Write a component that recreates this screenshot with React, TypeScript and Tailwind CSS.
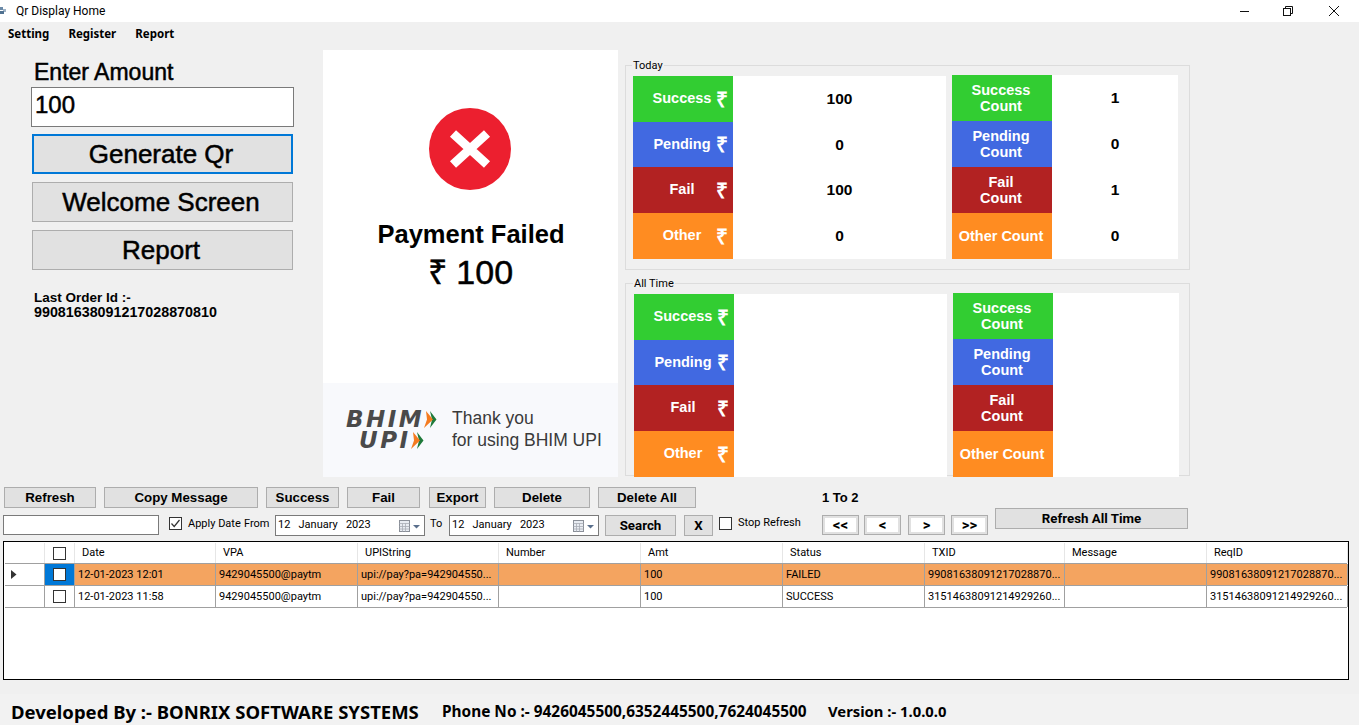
const ui = { fontFamily: '"Roboto", sans-serif' };

const stats = [
  { label: "Success", count: ["Success", "Count"], color: "bg-[#32cd32]", h: "h-[46px]", value: "100", n: "1" },
  { label: "Pending", count: ["Pending", "Count"], color: "bg-[#4169e1]", h: "h-[45px]", value: "0", n: "0" },
  { label: "Fail", count: ["Fail", "Count"], color: "bg-[#b22222]", h: "h-[46px]", value: "100", n: "1" },
  { label: "Other", count: ["Other Count"], color: "bg-[#ff8c21]", h: "h-[46px]", value: "0", n: "0" },
];

const columns = ["Date", "VPA", "UPIString", "Number", "Amt", "Status", "TXID", "Message", "ReqID"];

const rows = [
  {
    selected: true,
    cells: ["12-01-2023 12:01", "9429045500@paytm", "upi://pay?pa=942904550...", "", "100", "FAILED", "99081638091217028870...", "", "99081638091217028870..."],
  },
  {
    selected: false,
    cells: ["12-01-2023 11:58", "9429045500@paytm", "upi://pay?pa=942904550...", "", "100", "SUCCESS", "31514638091214929260...", "", "31514638091214929260..."],
  },
];

const gridCols = "grid grid-cols-[40px_30px_141px_142px_141px_142px_142px_142px_140px_142px_141px]";

function Btn({ w, children, className = "" }: { w: string; children: string; className?: string }) {
  return (
    <button className={`${w} h-[21px] shrink-0 bg-[#e1e1e1] border border-[#adadad] text-[13.3px] leading-[20px] font-bold text-black ${className}`}>
      {children}
    </button>
  );
}

function BigBtn({ children, focus }: { children: string; focus?: boolean }) {
  return (
    <button
      className={`w-[261px] h-[40px] pr-[3px] bg-[#e1e1e1] text-[26px] leading-none [-webkit-text-stroke:0.5px_#000] text-black ${
        focus ? "border-2 border-[#0078d7]" : "border border-[#adadad]"
      }`}
    >
      {children}
    </button>
  );
}

function PageBtn({ children }: { children: string }) {
  return (
    <button className="w-[37px] h-[20px] shrink-0 border border-[#adadad] bg-[#e1e1e1] p-[2px]">
      <span className="flex h-full items-center justify-center bg-white text-[15px] leading-none font-bold">{children}</span>
    </button>
  );
}

function Check({ checked }: { checked?: boolean }) {
  return (
    <span className="flex w-[13px] h-[13px] shrink-0 items-center justify-center border border-[#333] bg-white">
      {checked && (
        <svg width="11" height="11" viewBox="0 0 11 11" fill="none" stroke="#333" strokeWidth="1.2">
          <path d="M1.5 5.5 4.2 8.5 9.5 2" />
        </svg>
      )}
    </span>
  );
}

function DatePicker() {
  return (
    <div className="flex w-[150px] h-[21px] shrink-0 items-center border border-[#7a7a7a] bg-white pl-[2px] text-[11px] text-black" style={ui}>
      <span className="whitespace-pre">12   January   2023</span>
      <svg className="ml-auto mr-[2px]" width="24" height="14" viewBox="0 0 24 14">
        <rect x="1.5" y="1.5" width="10" height="11" fill="#e8ecf2" stroke="#8a8f98" />
        <path d="M1.5 4.5h10M4.5 4.5v8M7.5 4.5v8M1.5 7.5h10M1.5 10h10" stroke="#a8adb5" strokeWidth="0.8" />
        <path d="M15 6h7l-3.5 3.5z" fill="#5a6f8c" />
      </svg>
    </div>
  );
}

function Chevrons() {
  return (
    <svg className="shrink-0" width="13" height="17" viewBox="0 0 13 17">
      <path d="M6 0l6.5 8.5L6 17l2-8.5z" fill="#1f7a3a" />
      <path d="M2 0l7 8.5L0 17l3-8.5z" fill="#f47b20" />
    </svg>
  );
}

function StatPanel({ title, showValues, inset }: { title: string; showValues: boolean; inset: string }) {
  return (
    <fieldset className={`w-[565px] shrink-0 border border-[#dcdcdc] ${inset} m-0 min-w-0`}>
      <legend className="-ml-[1px] px-[1px] text-[11px] leading-[13px] text-black" style={ui}>
        {title}
      </legend>
      <div className="flex items-start pt-[3px]">
        <div className="w-[313px] mt-[1px] shrink-0">
          {stats.map((s) => (
            <div key={s.label} className={`flex ${s.h}`}>
              <div className={`flex w-[100px] items-center ${s.color} text-white font-bold text-[14.5px]`}>
                <span className="ml-[15px] w-[68px] text-center">{s.label}</span>
                <span className="text-[21px] leading-none font-bold">₹</span>
              </div>
              <div className="flex w-[213px] items-center justify-center bg-white text-[15.5px] font-bold text-black">
                {showValues ? s.value : ""}
              </div>
            </div>
          ))}
        </div>
        <div className="ml-[6px] w-[226px] shrink-0">
          {stats.map((s) => (
            <div key={s.label} className="flex h-[46px]">
              <div className={`flex w-[100px] flex-col items-center justify-center pr-[2px] ${s.color} text-white font-bold text-[14.5px] leading-[16px]`}>
                {s.count.map((line) => (
                  <span key={line} className="whitespace-nowrap">{line}</span>
                ))}
              </div>
              <div className="flex w-[126px] items-center justify-center bg-white text-[15.5px] font-bold text-black">
                {showValues ? s.n : ""}
              </div>
            </div>
          ))}
        </div>
      </div>
    </fieldset>
  );
}

export default function App() {
  return (
    <div className="flex flex-col w-[1359px] h-[725px] overflow-hidden bg-[#f0f0f0] text-black" style={{ fontFamily: '"Liberation Sans", Arial, sans-serif' }}>
      {/* Title bar */}
      <div className="flex h-[22px] shrink-0 items-center bg-white" style={ui}>
        <svg className="shrink-0" width="7" height="12" viewBox="0 0 7 12">
          <rect x="0" y="2" width="3" height="3" fill="#6b8aa8" />
          <rect x="3" y="4" width="3" height="3" fill="#9fb3c6" />
          <rect x="0" y="6" width="4" height="3" fill="#4f7190" />
        </svg>
        <span className="ml-[9px] text-[12px] text-black">Qr Display Home</span>
        <div className="ml-auto flex items-center">
          <svg width="9" height="10" viewBox="0 0 9 10" stroke="#111" fill="none">
            <path d="M0 5.5h9" />
          </svg>
          <svg className="ml-[34px]" width="10" height="10" viewBox="0 0 10 10" stroke="#111" fill="none">
            <rect x="0.5" y="2.5" width="7" height="7" />
            <path d="M2.5 2.5v-2h7v7h-2" />
          </svg>
          <svg className="ml-[36px] mr-[20px]" width="10" height="10" viewBox="0 0 10 10" stroke="#111" fill="none">
            <path d="M0 0l10 10M10 0L0 10" />
          </svg>
        </div>
      </div>

      {/* Menu */}
      <div className="flex h-[23px] shrink-0 items-center gap-[19px] pl-[8px] text-[11.5px] font-bold" style={{ fontFamily: '"Noto Sans", sans-serif' }}>
        <span>Setting</span>
        <span>Register</span>
        <span>Report</span>
      </div>

      {/* Main */}
      <div className="flex h-[442px] shrink-0">
        <div className="w-[323px] shrink-0 pl-[32px]">
          <div className="mt-[14px] ml-[2px] text-[23px] leading-[26px] [-webkit-text-stroke:0.5px_#000]">Enter Amount</div>
          <div className="-ml-[1px] mt-[2px] flex h-[40px] w-[263px] items-center border border-[#7a7a7a] bg-white pl-[3px] pb-[4px] text-[24px] [-webkit-text-stroke:0.5px_#000]">
            100
          </div>
          <div className="mt-[7px] flex flex-col gap-[8px]">
            <BigBtn focus>Generate Qr</BigBtn>
            <BigBtn>Welcome Screen</BigBtn>
            <BigBtn>Report</BigBtn>
          </div>
          <div className="ml-[2px] mt-[20px] text-[13.5px] leading-[15px] font-bold">
            Last Order Id :-
            <br />
            <span className="text-[14.3px]">99081638091217028870810</span>
          </div>
        </div>

        <div className="mt-[5px] flex h-[427px] w-[295px] shrink-0 flex-col bg-white">
          <div className="flex flex-1 flex-col items-center">
            <div className="mt-[58px] -ml-[2px] flex h-[82px] w-[82px] items-center justify-center rounded-full bg-[#ec1f2f]">
              <svg width="42" height="38" viewBox="0 0 42 38" fill="none" stroke="white" strokeWidth="9">
                <path d="M4 3.5 38 34.5M38 3.5 4 34.5" />
              </svg>
            </div>
            <div className="mt-[28px] ml-[1px] text-[25.5px] leading-[32px] font-bold">Payment Failed</div>
            <div className="mt-[1px] text-[34px] leading-[42px] [-webkit-text-stroke:0.5px_#000]">₹ 100</div>
          </div>
          <div className="flex h-[94px] shrink-0 items-center bg-[#f8f9fc] pl-[23px]">
            <div className="flex w-[92px] shrink-0 flex-col text-[23px] leading-[21px] italic font-bold tracking-[2.5px] text-[#4a4a4a]" style={{ fontFamily: '"DejaVu Sans", sans-serif' }}>
              <div className="flex items-center">
                <span>BHIM</span>
                <Chevrons />
              </div>
              <div className="ml-[13px] flex items-center">
                <span>UPI</span>
                <Chevrons />
              </div>
            </div>
            <div className="ml-[14px] pb-[2px] whitespace-nowrap text-[17.5px] leading-[22px] text-[#3a3a3a]">
              Thank you
              <br />
              for using BHIM UPI
            </div>
          </div>
        </div>

        <div className="ml-[7px] mt-[14px] flex flex-col gap-[7px]">
          <StatPanel title="Today" showValues inset="pl-[7px] h-[211px]" />
          <StatPanel title="All Time" showValues={false} inset="pl-[8px] h-[199px]" />
        </div>
      </div>

      {/* Toolbar */}
      <div className="flex h-[21px] shrink-0 items-center gap-[8px] pl-[4px]">
        <Btn w="w-[92px]">Refresh</Btn>
        <Btn w="w-[154px]">Copy Message</Btn>
        <Btn w="w-[73px]">Success</Btn>
        <Btn w="w-[73px]">Fail</Btn>
        <Btn w="w-[57px]" className="ml-[1px]">Export</Btn>
        <Btn w="w-[96px]">Delete</Btn>
        <Btn w="w-[98px]">Delete All</Btn>
        <span className="ml-[118px] text-[13px] font-bold">1 To 2</span>
      </div>
      <div className="mt-[7px] flex h-[21px] shrink-0 items-start pl-[3px] text-[11px]" style={ui}>
        <div className="h-[20px] w-[156px] shrink-0 border border-[#7a7a7a] bg-white" />
        <div className="ml-[10px] mt-[2px]"><Check checked /></div>
        <span className="ml-[6px] mt-[1px] w-[52px] shrink-0 whitespace-nowrap">Apply Date</span>
        <span className="ml-[4px] mt-[1px] w-[25px] shrink-0 whitespace-nowrap">From</span>
        <div className="ml-[6px]"><DatePicker /></div>
        <span className="ml-[5px] mt-[1px] w-[12px] shrink-0 whitespace-nowrap">To</span>
        <div className="ml-[7px]"><DatePicker /></div>
        <Btn w="w-[71px]" className="ml-[6px]" >Search</Btn>
        <Btn w="w-[29px]" className="ml-[8px]">X</Btn>
        <div className="ml-[6px] mt-[2px]"><Check /></div>
        <span className="ml-[6px] w-[62px] shrink-0 whitespace-nowrap">Stop Refresh</span>
        <div className="ml-[22px] flex gap-[5px]">
          <PageBtn>{"<<"}</PageBtn>
          <PageBtn>{"<"}</PageBtn>
          <span className="ml-[2px]"><PageBtn>{">"}</PageBtn></span>
          <span className="ml-[1px]"><PageBtn>{">>"}</PageBtn></span>
        </div>
        <Btn w="w-[193px]" className="ml-[7px] -mt-[7px]">Refresh All Time</Btn>
      </div>

      {/* Grid */}
      <div className="mx-[3px] mt-[5px] h-[139px] w-[1346px] shrink-0 border border-black bg-white p-[1px] text-[11px]" style={ui}>
        <div className={`${gridCols} h-[21px] border-b border-[#a0a0a0]`}>
          <div className="border-r border-[#e6e6e6]" />
          <div className="flex items-center justify-center border-r border-[#e6e6e6]">
            <Check />
          </div>
          {columns.map((c) => (
            <div key={c} className="flex items-center border-r border-[#e6e6e6] pl-[7px]">
              {c}
            </div>
          ))}
        </div>
        {rows.map((r) => (
          <div key={r.cells[0]} className={`${gridCols} h-[22px] border-b border-[#a0a0a0] ${r.selected ? "bg-[#f4a460]" : "bg-white"}`}>
            <div className="flex items-center border-r border-[#a0a0a0] bg-white pl-[6px]">
              {r.selected && (
                <svg width="6" height="9" viewBox="0 0 6 9">
                  <path d="M0 0l5.5 4.5L0 9z" fill="#333" />
                </svg>
              )}
            </div>
            <div className={`flex items-center justify-center border-r border-[#a0a0a0] ${r.selected ? "bg-[#0078d7]" : "bg-white"}`}>
              <Check />
            </div>
            {r.cells.map((text, i) => (
              <div key={i} className="flex items-center overflow-hidden whitespace-nowrap border-r border-[#a0a0a0] pl-[3px] pt-[1px]">
                {text}
              </div>
            ))}
          </div>
        ))}
      </div>

      {/* Footer */}
      <div className="mt-[14px] flex h-[31px] items-center bg-[#f2f2f2] pl-[11px] pt-[4px] font-bold" style={{ fontFamily: '"Noto Sans", sans-serif' }}>
        <span className="w-[431px] shrink-0 text-[18.5px] whitespace-nowrap">Developed By :- BONRIX SOFTWARE SYSTEMS</span>
        <span className="w-[386px] shrink-0 text-[15.4px] whitespace-nowrap">Phone No :- 9426045500,6352445500,7624045500</span>
        <span className="text-[14.8px] whitespace-nowrap">Version :- 1.0.0.0</span>
      </div>
    </div>
  );
}
